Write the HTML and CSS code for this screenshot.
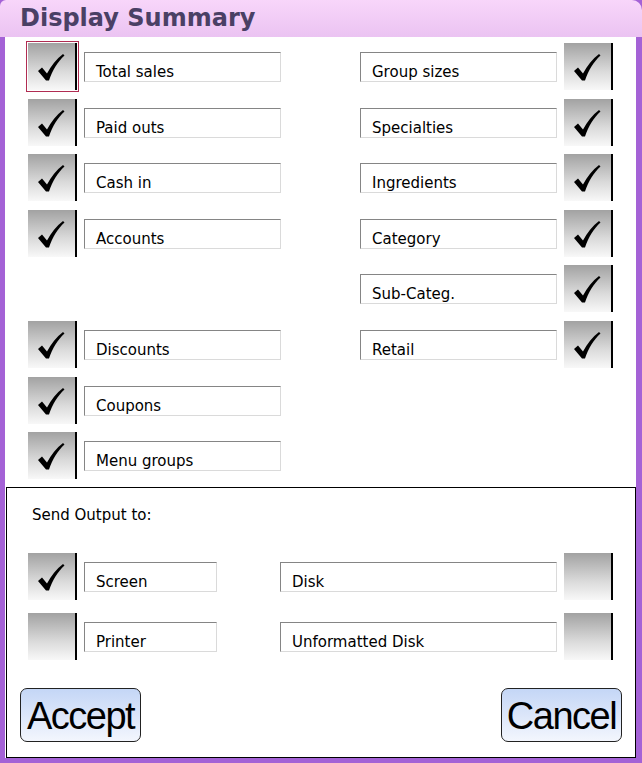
FILE: index.html
```html
<!DOCTYPE html>
<html lang="en">
<head>
    <meta charset="UTF-8">
    <meta name="viewport" content="width=device-width, initial-scale=1.0">
    <title>Display Summary</title>
    <link rel="stylesheet" href="styles.css">
</head>
<body>
    <div class="window">
        <div class="titlebar">Display Summary</div>

        <div class="client">
            <div class="options">
                <div class="item">
                    <div class="check on focus"></div>
                    <div class="field">Total sales</div>
                </div>
                <div class="item">
                    <div class="field">Group sizes</div>
                    <div class="check on"></div>
                </div>

                <div class="item">
                    <div class="check on"></div>
                    <div class="field">Paid outs</div>
                </div>
                <div class="item">
                    <div class="field">Specialties</div>
                    <div class="check on"></div>
                </div>

                <div class="item">
                    <div class="check on"></div>
                    <div class="field">Cash in</div>
                </div>
                <div class="item">
                    <div class="field">Ingredients</div>
                    <div class="check on"></div>
                </div>

                <div class="item">
                    <div class="check on"></div>
                    <div class="field">Accounts</div>
                </div>
                <div class="item">
                    <div class="field">Category</div>
                    <div class="check on"></div>
                </div>

                <div class="item"></div>
                <div class="item">
                    <div class="field">Sub-Categ.</div>
                    <div class="check on"></div>
                </div>

                <div class="item">
                    <div class="check on"></div>
                    <div class="field">Discounts</div>
                </div>
                <div class="item">
                    <div class="field">Retail</div>
                    <div class="check on"></div>
                </div>

                <div class="item">
                    <div class="check on"></div>
                    <div class="field">Coupons</div>
                </div>
                <div class="item"></div>

                <div class="item">
                    <div class="check on"></div>
                    <div class="field">Menu groups</div>
                </div>
                <div class="item"></div>
            </div>

            <div class="output">
                <p class="output-title">Send Output to:</p>

                <div class="out-row">
                    <div class="item">
                        <div class="check on"></div>
                        <div class="field short">Screen</div>
                    </div>
                    <div class="item">
                        <div class="field long">Disk</div>
                        <div class="check"></div>
                    </div>
                </div>

                <div class="out-row">
                    <div class="item">
                        <div class="check"></div>
                        <div class="field short">Printer</div>
                    </div>
                    <div class="item">
                        <div class="field long">Unformatted Disk</div>
                        <div class="check"></div>
                    </div>
                </div>

                <div class="actions">
                    <button class="btn">Accept</button>
                    <button class="btn">Cancel</button>
                </div>
            </div>
        </div>
    </div>

    <script>
        // draw the tick into every checked box
        var tick = '<svg width="47" height="47" viewBox="0 0 47 47">' +
            '<path d="M10 28 L14 24.5 L19 30.5 C23 23 28.5 16 35 11 L36.5 12.5 C30 18.5 24.5 27 21 37.5 L18 37.5 Z" fill="#000"/>' +
            '</svg>';
        document.querySelectorAll('.check.on').forEach(function (el) {
            el.innerHTML = tick;
        });
    </script>
</body>
</html>
```

FILE: styles.css
```css
body {
    margin: 0;
    background: #a462d6;
}
.window {
    width: 642px;
    height: 763px;
    box-sizing: border-box;
    padding: 0 6px 5px 5px;
    display: flex;
    flex-direction: column;
    background: linear-gradient(#f8d6fa, #ebc3f2) top / 100% 37px no-repeat, #a462d6;
    border-top-right-radius: 10px;
    border-top-left-radius: 6px;
}
.titlebar {
    height: 37px;
    line-height: 37px;
    padding-left: 15px;
    font-family: "DejaVu Sans", sans-serif;
    font-weight: bold;
    font-size: 24px;
    color: #4a4065;
}
.client {
    flex: 1;
    background: #fff;
    display: flex;
    flex-direction: column;
}
.options {
    height: 450px;
    box-sizing: border-box;
    padding: 6px 0 0 23px;
    display: grid;
    grid-template-columns: 253px 253px;
    grid-auto-rows: 55.6px;
    column-gap: 79px;
}
.item {
    display: flex;
    align-items: flex-start;
    gap: 7px;
}
.check {
    width: 47px;
    height: 47px;
    flex: none;
    border-right: 2px solid #000;
    background: linear-gradient(#a2a2a2, #dadada 60%, #f8f8f8);
}
.check svg {
    display: block;
}
.focus {
    outline: 1px solid #b02c52;
    outline-offset: 1px;
}
.field {
    width: 197px;
    height: 30px;
    margin-top: 9px;
    box-sizing: border-box;
    padding: 10px 0 0 11px;
    border: 1px solid;
    border-color: #858585 #dadada #dadada #858585;
    font-family: "DejaVu Sans", sans-serif;
    font-size: 15px;
    line-height: 18px;
    color: #000;
    white-space: nowrap;
}
.field.short {
    width: 133px;
}
.field.long {
    width: 277px;
}
.output {
    flex: 1;
    margin-left: 1px;
    border: 1px solid #000;
    display: flex;
    flex-direction: column;
}
.output-title {
    margin: 18px 0 0 25px;
    font-family: "DejaVu Sans", sans-serif;
    font-size: 15px;
    line-height: 18px;
}
.out-row {
    display: flex;
    justify-content: space-between;
    padding: 0 22px 0 21px;
    margin-top: 13px;
}
.output-title + .out-row {
    margin-top: 29px;
}
.actions {
    display: flex;
    justify-content: space-between;
    padding: 0 13px;
    margin-top: 28px;
}
.btn {
    width: 121px;
    height: 54px;
    padding: 2px 0 0;
    border: 1px solid #222;
    border-radius: 7px;
    background: linear-gradient(#c4d6f6, #f3f6fd);
    font-family: "Liberation Sans", Arial, sans-serif;
    font-size: 38px;
    letter-spacing: -1.5px;
    color: #000;
}
```
